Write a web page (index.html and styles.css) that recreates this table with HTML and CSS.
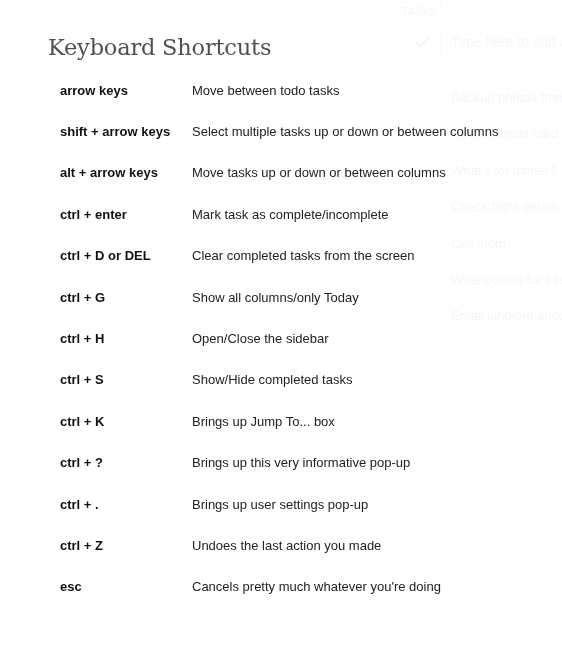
FILE: index.html
```html
<!DOCTYPE html>
<html>
<head>
<meta charset="utf-8">
<link rel="stylesheet" href="styles.css">
</head>
<body>
<div class="app">
  <div class="col-head">
    <span class="col-label">TASKS</span>
    <span class="vline"></span>
  </div>
  <div class="add-row">
    <svg class="check" width="16" height="12" viewBox="0 0 16 12"><path d="M1 6 L6 10.5 L15 1" fill="none" stroke="#333" stroke-width="2"/></svg>
    <span class="vline tall"></span>
    <span class="add-input">Type here to add a new task</span>
  </div>
  <ul class="tasks">
    <li>Backup photos from phone</li>
    <li>Review credit card statement</li>
    <li>What's for dinner?</li>
    <li>Check flight details</li>
    <li>Call mom</li>
    <li>Write outline for case study</li>
    <li>Email landlord about lease</li>
  </ul>
</div>
<div class="overlay"></div>
<div class="modal">
  <h1 class="title">Keyboard Shortcuts</h1>
  <div class="shortcuts">
    <div class="key">arrow keys</div><div class="desc">Move between todo tasks</div>
    <div class="key">shift + arrow keys</div><div class="desc">Select multiple tasks up or down or between columns</div>
    <div class="key">alt + arrow keys</div><div class="desc">Move tasks up or down or between columns</div>
    <div class="key">ctrl + enter</div><div class="desc">Mark task as complete/incomplete</div>
    <div class="key">ctrl + D or DEL</div><div class="desc">Clear completed tasks from the screen</div>
    <div class="key">ctrl + G</div><div class="desc">Show all columns/only Today</div>
    <div class="key">ctrl + H</div><div class="desc">Open/Close the sidebar</div>
    <div class="key">ctrl + S</div><div class="desc">Show/Hide completed tasks</div>
    <div class="key">ctrl + K</div><div class="desc">Brings up Jump To... box</div>
    <div class="key">ctrl + ?</div><div class="desc">Brings up this very informative pop-up</div>
    <div class="key">ctrl + .</div><div class="desc">Brings up user settings pop-up</div>
    <div class="key">ctrl + Z</div><div class="desc">Undoes the last action you made</div>
    <div class="key">esc</div><div class="desc">Cancels pretty much whatever you're doing</div>
  </div>
</div>
</body>
</html>
```
FILE: styles.css
```css
html, body {
  margin: 0;
  padding: 0;
  background: #fff;
  width: 562px;
  height: 647px;
  overflow: hidden;
  font-family: "Liberation Sans", Arial, sans-serif;
}

.app {
  position: absolute;
  left: 402px;
  top: 0;
  width: 160px;
  overflow: hidden;
  color: #444;
}

.col-head {
  display: flex;
  align-items: flex-start;
  height: 22px;
}
.col-label {
  font-size: 10px;
  letter-spacing: 0.6px;
  margin-top: 6px;
  width: 38px;
  flex-shrink: 0;
}
.vline {
  display: block;
  flex-shrink: 0;
  width: 1px;
  height: 12px;
  background: #999;
}
.vline.tall {
  height: 26px;
  margin-right: 10px;
}
.add-row {
  display: flex;
  align-items: center;
  height: 30px;
  margin-top: 5px;
  border-bottom: 1px solid #ddd;
}
.check {
  flex-shrink: 0;
  margin-left: 12px;
  margin-right: 10px;
}
.add-input {
  flex-shrink: 0;
  font-size: 14px;
  color: #555;
  white-space: nowrap;
}
.tasks {
  list-style: none;
  margin: 32px 0 0 49px;
  padding: 0;
}
.tasks li {
  font-size: 13px;
  height: 36.4px;
  line-height: 16px;
  white-space: nowrap;
}

.overlay {
  position: fixed;
  inset: 0;
  background: rgba(255, 255, 255, 0.95);
}

.modal {
  position: relative;
  padding: 33px 0 0 48px;
}
.title {
  margin: 0 0 9px 0;
  font-family: "DejaVu Serif", serif;
  font-weight: normal;
  font-size: 22.5px;
  line-height: 28px;
  color: #505050;
  letter-spacing: -0.2px;
}
.shortcuts {
  display: grid;
  grid-template-columns: 144px auto;
  grid-auto-rows: 41.4px;
  align-items: center;
  font-size: 13px;
  line-height: 16px;
}
.key {
  padding-left: 12px;
  font-weight: bold;
  color: #111;
}
.desc {
  color: #222;
  white-space: nowrap;
}
```
